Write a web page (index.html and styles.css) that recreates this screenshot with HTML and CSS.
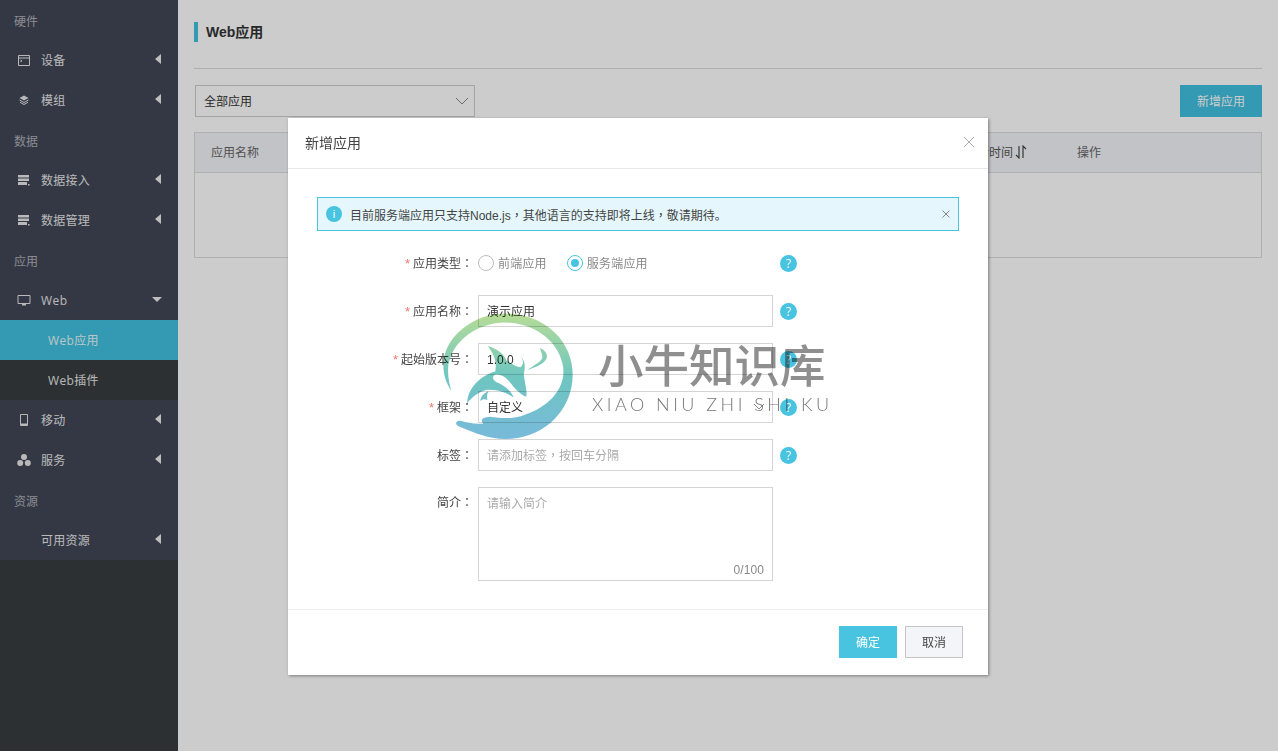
FILE: index.html
```html
<!DOCTYPE html>
<html lang="zh">
<head>
<meta charset="utf-8">
<title>Web应用</title>
<link rel="stylesheet" href="styles.css">
</head>
<body>
<div class="app">
  <aside class="sidebar">
    <nav class="nav">
      <div class="nav-section">硬件</div>
      <a class="nav-item"><svg class="nav-icon" viewBox="0 0 14 14"><path d="M1.500 2.500h11v10h-11zM1.500 5h11M3.500 7l1.500 1-1.500 .5" fill="none" stroke="currentColor"/></svg><span class="nav-text">设备</span><i class="caret-left"></i></a>
      <a class="nav-item"><svg class="nav-icon" viewBox="0 0 14 14"><path d="M7 2.500l4.500 2.500L7 7.500 2.500 5z" fill="currentColor"/><path d="M2.500 7L7 9.500 11.500 7M3 9.300L7 11.500l4-2.200" fill="none" stroke="currentColor"/></svg><span class="nav-text">模组</span><i class="caret-left"></i></a>
      <div class="nav-section">数据</div>
      <a class="nav-item"><svg class="nav-icon" viewBox="0 0 14 14"><path d="M1 2h11v2.500H1zM1 5.500h11V8H1zM1 9h9v3H1zM11 11h1.500v1.500H11z" fill="currentColor"/></svg><span class="nav-text">数据接入</span><i class="caret-left"></i></a>
      <a class="nav-item"><svg class="nav-icon" viewBox="0 0 14 14"><path d="M1 2h11v2.500H1zM1 5.500h11V8H1zM1 9h9v3H1zM11 11h1.500v1.500H11z" fill="currentColor"/></svg><span class="nav-text">数据管理</span><i class="caret-left"></i></a>
      <div class="nav-section">应用</div>
      <a class="nav-item"><svg class="nav-icon" viewBox="0 0 14 14"><path d="M1 2.500h12v8H1z" fill="none" stroke="currentColor"/><path d="M5 11h4v1.500H5z" fill="currentColor"/></svg><span class="nav-text nav-latin">Web</span><i class="caret-down"></i></a>
      <a class="nav-sub is-active">Web应用</a>
      <a class="nav-sub">Web插件</a>
      <a class="nav-item"><svg class="nav-icon" viewBox="0 0 14 14"><path d="M3.500 1.500h7v11h-7z" fill="none" stroke="currentColor"/><path d="M4 10.500h6V13H4z" fill="currentColor"/></svg><span class="nav-text">移动</span><i class="caret-left"></i></a>
      <a class="nav-item"><svg class="nav-icon" viewBox="0 0 14 14"><circle cx="7" cy="4" r="3" fill="currentColor"/><circle cx="3.200" cy="10" r="3" fill="currentColor"/><circle cx="10.800" cy="10" r="3" fill="currentColor"/></svg><span class="nav-text">服务</span><i class="caret-left"></i></a>
      <div class="nav-section">资源</div>
      <a class="nav-item"><span class="nav-icon"></span><span class="nav-text">可用资源</span><i class="caret-left"></i></a>
    </nav>
  </aside>

  <main class="main">
    <header class="page-head"><h1 class="page-title">Web应用</h1></header>
    <div class="toolbar">
      <div class="select select-filter"><span class="up1">全部应用</span><svg class="chevron" viewBox="0 0 14 8"><path d="M1 1l6 6 6-6" fill="none" stroke="currentColor"/></svg></div>
      <button class="btn btn-primary btn-add">新增应用</button>
    </div>
    <section class="table">
      <div class="table-head">
        <span class="col-name">应用名称</span>
        <span class="col-time">更新时间<svg class="sort" viewBox="0 0 12 14"><path d="M4 1v12L1 10M8 13V1l3 3" fill="none" stroke="currentColor" stroke-width="1.200"/></svg></span>
        <span class="col-op">操作</span>
      </div>
      <div class="table-body"></div>
    </section>
  </main>
</div>

<div class="mask"></div>

<div class="modal">
  <div class="modal-head">
    <h2 class="modal-title">新增应用</h2>
    <svg class="modal-close" viewBox="0 0 12 12"><path d="M1 1l10 10M11 1L1 11" fill="none" stroke="currentColor"/></svg>
  </div>
  <div class="modal-body">
    <div class="alert">
      <span class="alert-icon">i</span>
      <span class="alert-text">目前服务端应用只支持Node.js<span class="punct" lang="zh-Hant">，</span>其他语言的支持即将上线<span class="punct" lang="zh-Hant">，</span>敬请期待。</span>
      <svg class="alert-close" viewBox="0 0 8 8"><path d="M.5.5l7 7M7.500.5l-7 7" fill="none" stroke="currentColor"/></svg>
    </div>
    <form class="form">
      <div class="row row-radio">
        <label class="label"><em>*</em>应用类型<span class="punct" lang="zh-Hant">：</span></label>
        <div class="control radios">
          <span class="radio"><i class="radio-dot"></i><span class="up1">前端应用</span></span>
          <span class="radio is-on"><i class="radio-dot"></i><span class="up1">服务端应用</span></span>
        </div>
        <span class="help">?</span>
      </div>
      <div class="row">
        <label class="label"><em>*</em>应用名称<span class="punct" lang="zh-Hant">：</span></label>
        <div class="control input">演示应用</div>
        <span class="help">?</span>
      </div>
      <div class="row">
        <label class="label"><em>*</em>起始版本号<span class="punct" lang="zh-Hant">：</span></label>
        <div class="control input">1.0.0</div>
        <span class="help">?</span>
      </div>
      <div class="row">
        <label class="label"><em>*</em>框架<span class="punct" lang="zh-Hant">：</span></label>
        <div class="control input select-frame">自定义<svg class="chevron" viewBox="0 0 14 8"><path d="M2 1l5 5 5-5" fill="none" stroke="currentColor"/></svg></div>
        <span class="help">?</span>
      </div>
      <div class="row">
        <label class="label">标签<span class="punct" lang="zh-Hant">：</span></label>
        <div class="control input is-empty"><span class="up1">请添加标签<span class="punct" lang="zh-Hant">，</span>按回车分隔</span></div>
        <span class="help">?</span>
      </div>
      <div class="row row-area">
        <label class="label">简介<span class="punct" lang="zh-Hant">：</span></label>
        <div class="control textarea is-empty">请输入简介<span class="count">0/100</span></div>
      </div>
    </form>
  </div>
  <div class="modal-foot">
    <button class="btn btn-ok">确定</button>
    <button class="btn btn-cancel">取消</button>
  </div>
</div>

<div class="watermark">
  <svg class="wm-logo" viewBox="190 30 395 405">
    <defs>
      <linearGradient id="wmg" gradientUnits="userSpaceOnUse" x1="0" y1="40" x2="0" y2="425">
        <stop offset="0" stop-color="#b9dd95"/>
        <stop offset=".5" stop-color="#6fc6c0"/>
        <stop offset="1" stop-color="#78b9dc"/>
      </linearGradient>
    </defs>
    <g fill="url(#wmg)">
      <path d="M215 275C175 220 180 130 270 75C340 30 450 35 520 100C600 175 590 300 510 370C450 420 370 430 300 405C275 396 245 385 232 378C225 372 230 362 242 364C265 370 285 375 310 372C300 362 305 354 330 352C370 358 405 358 435 345C510 320 560 260 545 195C530 120 450 70 370 72C280 75 205 140 205 215C205 240 210 260 215 275Z"/>
      <path d="M262 312C262 270 300 230 345 218C352 190 340 165 323 142C350 150 372 165 378 185C395 195 410 205 420 205C430 195 430 185 420 172C435 185 435 205 430 225C432 250 440 270 438 292C425 292 400 265 385 245C370 228 350 222 340 230C335 240 345 248 355 252C375 262 392 275 400 295C380 280 350 270 320 272C295 278 275 295 262 312Z"/>
      <path d="M478 148C490 152 502 165 498 178C490 195 465 205 440 213C462 198 488 185 485 172C483 162 480 155 478 148Z"/>
      <path d="M300 305C303 290 313 280 325 276C320 285 320 292 322 302C315 299 308 299 300 305Z"/>
    </g>
  </svg>
  <div class="wm-text">
    <div class="wm-cn">小牛知识库</div>
    <div class="wm-en">XIAO NIU ZHI SHI KU</div>
  </div>
</div>
</body>
</html>
```
FILE: styles.css
```css
* { box-sizing: border-box; }
html, body { margin: 0; padding: 0; height: 100%; overflow: hidden; }
body {
  font-family: "Liberation Sans", "Noto Sans CJK SC", sans-serif;
  font-size: 12px;
  color: #333;
  background: #fff;
}
.app { display: flex; height: 751px; }
.up1 { position: relative; top: -1px; }
.punct { font-family: "Noto Sans CJK TC", sans-serif; }

/* sidebar */
.sidebar { width: 178px; flex: none; background: #373c3f; }
.nav { background: #414757; color: #e8e8e8; }
.nav-section { height: 40px; line-height: 40px; padding: 2px 0 0 14px; color: #aeb0b6; }
.nav-item { height: 40px; display: flex; align-items: center; padding: 0 0 1px 17px; position: relative; }
.nav-icon { width: 14px; height: 14px; flex: none; margin-right: 10px; display: block; }
.nav-text { flex: none; letter-spacing: .25px; }
.nav-latin { font-family: "Open Sans", sans-serif; letter-spacing: .5px; position: relative; top: 1px; }
.caret-left {
  position: absolute; left: 155px; top: 14px; width: 0; height: 0;
  border-style: solid; border-width: 5.500px 6px 5.500px 0;
  border-color: transparent #eee transparent transparent;
}
.caret-down {
  position: absolute; left: 152px; top: 17px; width: 0; height: 0;
  border-style: solid; border-width: 5px 5.500px 0 5.500px;
  border-color: #eee transparent transparent transparent;
}
.nav-sub { display: block; height: 40px; line-height: 40px; padding: 1px 0 0 48px; background: #373c3f; font-family: "Open Sans", "Noto Sans CJK SC", sans-serif; letter-spacing: .35px; }
.nav-sub.is-active { background: #42c0df; color: #e8f8fc; }

/* main */
.main { flex: 1; min-width: 0; padding: 0 16px; background: #fff; }
.page-head { height: 69px; padding-top: 22px; border-bottom: 1px solid #ddd; }
.page-title {
  margin: 0; height: 20px; line-height: 20px; padding-left: 8px;
  border-left: 4px solid #42c0df; font-size: 14px; font-weight: bold; color: #333;
}
.toolbar { display: flex; justify-content: space-between; padding: 16px 0 15px 1px; }
.select {
  width: 280px; height: 32px; border: 1px solid #ccc; padding-left: 8px;
  display: flex; align-items: center; justify-content: space-between; color: #333;
}
.chevron { width: 14px; height: 8px; margin-right: 5px; color: #888; }
.btn { border: 0; padding: 0 0 2px; height: 32px; font: inherit; display: block; }
.btn-primary { width: 82px; background: #42c0df; color: #fff; }
.table { border: 1px solid #ddd; height: 126px; }
.table-head {
  height: 40px; background: #f3f4f8; border-bottom: 1px solid #ddd; color: #666;
  display: grid; grid-template-columns: 700px 166px 1fr; align-items: center; padding: 0 0 2px 16px;
}
.col-time { display: flex; justify-content: flex-end; align-items: center; padding-right: 50px; color: #555; }
.sort { width: 12px; height: 14px; margin-left: 2px; color: #444; flex: none; }

/* mask */
.mask { position: fixed; inset: 0; background: rgba(0,0,0,.2); }

/* modal */
.modal {
  position: fixed; left: 288px; top: 118px; width: 700px; height: 557px;
  background: #fff; box-shadow: 1px 1px 3px rgba(0,0,0,.4);
  display: flex; flex-direction: column;
}
.modal-head { height: 51px; flex: none; border-bottom: 1px solid #e9e9e9; padding: 0 17px 2px; display: flex; align-items: center; justify-content: space-between; }
.modal-title { margin: 0; font-size: 14px; font-weight: normal; color: #444; }
.modal-close { width: 12px; height: 12px; color: #aaa; margin: 0 -4px 0 0; }
.modal-body { flex: 1; padding: 28px 29px 0; }
.alert {
  height: 34px; border: 1px solid #48c3e0; background: #e5f7fc; display: flex; align-items: center;
  padding: 0 8px; color: #444;
}
.alert-icon {
  width: 16px; height: 16px; border-radius: 50%; background: #48c3e0; color: #fff; flex: none;
  text-align: center; line-height: 16px; font-size: 11px; margin-right: 8px;
}
.alert-text { flex: 1; }
.alert-close { width: 8px; height: 8px; color: #888; flex: none; }
.form { display: flex; flex-direction: column; gap: 16px; padding-top: 16px; }
.row { display: flex; align-items: center; height: 32px; }
.row-area { height: 94px; align-items: flex-start; }
.label { width: 156px; flex: none; margin-right: 5px; text-align: right; color: #444; position: relative; top: -1px; }
.row-area .label { line-height: 32px; }
.label em { color: #f0786a; font-style: normal; margin-right: 3px; font-size: 13px; }
.control { width: 295px; flex: none; }
.input { height: 32px; line-height: 32px; border: 1px solid #d4d4d4; padding-left: 8px; color: #333; position: relative; }
.is-empty { color: #aaa; }
.textarea { height: 94px; border: 1px solid #d4d4d4; padding: 9px 8px; line-height: 14px; position: relative; }
.count { position: absolute; right: 8px; bottom: 3px; color: #888; letter-spacing: .1px; }
.select-frame .chevron { position: absolute; right: 1px; top: 11px; width: 14px; }
.radios { display: flex; align-items: center; color: #888; letter-spacing: .2px; }
.radio { display: flex; align-items: center; margin-right: 20px; }
.radio-dot { width: 16px; height: 16px; border-radius: 50%; border: 1px solid #bbb; margin-right: 4px; position: relative; flex: none; }
.radio.is-on .radio-dot { border-color: #48c3e0; }
.radio.is-on .radio-dot::after {
  content: ""; position: absolute; left: 3px; top: 3px; width: 8px; height: 8px;
  border-radius: 50%; background: #48c3e0;
}
.help {
  width: 17px; height: 17px; border-radius: 50%; background: #48c3e0; color: #fff; flex: none;
  margin-left: 7px; text-align: center; line-height: 17px; font-size: 12px; font-family: "Open Sans", sans-serif;
}
.modal-foot { height: 66px; flex: none; border-top: 1px solid #eee; display: flex; justify-content: flex-end; gap: 8px; padding: 16px 25px 0 0; }
.btn-ok { width: 58px; background: #48c3e0; color: #fff; }
.btn-cancel { width: 58px; background: #f4f5f9; border: 1px solid #c4c4c4; color: #444; }

/* watermark */
.watermark { position: fixed; left: 443px; top: 308px; display: flex; pointer-events: none; mix-blend-mode: multiply; }
.wm-logo { width: 133px; height: 137px; flex: none; margin-right: 16px; display: block; }
.wm-text { padding-top: 27px; color: #8f8f8f; }
.wm-cn { font-size: 45.500px; line-height: 56px; font-family: "Noto Sans CJK SC", sans-serif; font-weight: 500; white-space: nowrap; margin-left: 6px; width: 232px; }
.wm-en { font-size: 18px; line-height: 20px; letter-spacing: 3.500px; white-space: nowrap; font-family: "Lato", sans-serif; font-weight: 300; margin-top: 3px; color: #777; }
```
